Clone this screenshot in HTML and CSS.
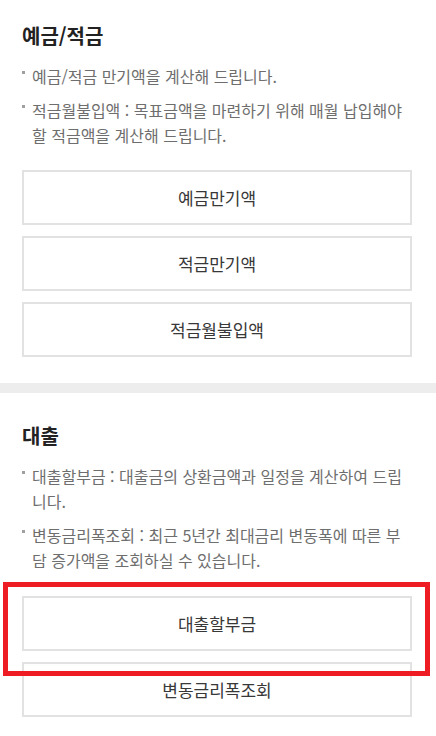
FILE: index.html
```html
<!DOCTYPE html>
<html lang="ko">
<head>
<meta charset="utf-8">
<title>계산기</title>
<link rel="stylesheet" href="styles.css">
</head>
<body>
<div class="page">
  <section class="section section-first">
    <h2 class="title">예금/적금</h2>
    <ul class="notes">
      <li>예금/적금 만기액을 계산해 드립니다.</li>
      <li>적금월불입액 : 목표금액을 마련하기 위해 매월 납입해야 할 적금액을 계산해 드립니다.</li>
    </ul>
    <div class="buttons">
      <a class="btn">예금만기액</a>
      <a class="btn">적금만기액</a>
      <a class="btn">적금월불입액</a>
    </div>
  </section>
  <div class="divider"></div>
  <section class="section section-second">
    <h2 class="title">대출</h2>
    <ul class="notes">
      <li>대출할부금 : 대출금의 상환금액과 일정을 계산하여 드립니다.</li>
      <li>변동금리폭조회 : 최근 5년간 최대금리 변동폭에 따른 부담 증가액을 조회하실 수 있습니다.</li>
    </ul>
    <div class="buttons">
      <a class="btn">대출할부금</a>
      <a class="btn">변동금리폭조회</a>
    </div>
  </section>
  <div class="highlight"></div>
</div>
</body>
</html>
```
FILE: styles.css
```css
html, body {
  margin: 0;
  padding: 0;
  background: #ffffff;
}
body {
  font-family: "Noto Sans CJK KR", "Noto Sans", sans-serif;
  width: 436px;
  height: 736px;
  overflow: hidden;
}
.page {
  position: relative;
}
.section {
  padding: 0 24px 25px 22px;
}
.section-first {
  padding-top: 21px;
  padding-bottom: 26px;
}
.section-second {
  padding-top: 28px;
}
.title {
  margin: 0 0 13px;
  font-size: 20px;
  line-height: 30px;
  font-weight: 700;
  color: #222222;
}
.notes {
  list-style: none;
  margin: 0;
  padding: 0;
  display: flex;
  flex-direction: column;
  gap: 9px;
}
.notes li {
  position: relative;
  padding-left: 10px;
  font-size: 16px;
  line-height: 25px;
  color: #6e6e6e;
  word-break: break-all;
}
.notes li::before {
  content: "";
  position: absolute;
  left: 0;
  top: 7px;
  width: 3px;
  height: 3px;
  background: #a0a0a0;
}
.buttons {
  margin-top: 22px;
  display: flex;
  flex-direction: column;
  gap: 11px;
}
.section-second .buttons {
  margin-top: 23px;
}
.btn {
  display: flex;
  align-items: center;
  justify-content: center;
  height: 51px;
  border: 2px solid #e2e2e2;
  font-size: 17px;
  font-weight: 400;
  color: #383838;
  text-decoration: none;
}
.divider {
  height: 10px;
  background: #ededed;
}
.highlight {
  position: absolute;
  left: 3px;
  top: 582px;
  width: 417px;
  height: 84px;
  border: 5px solid #ee1d24;
}
```
